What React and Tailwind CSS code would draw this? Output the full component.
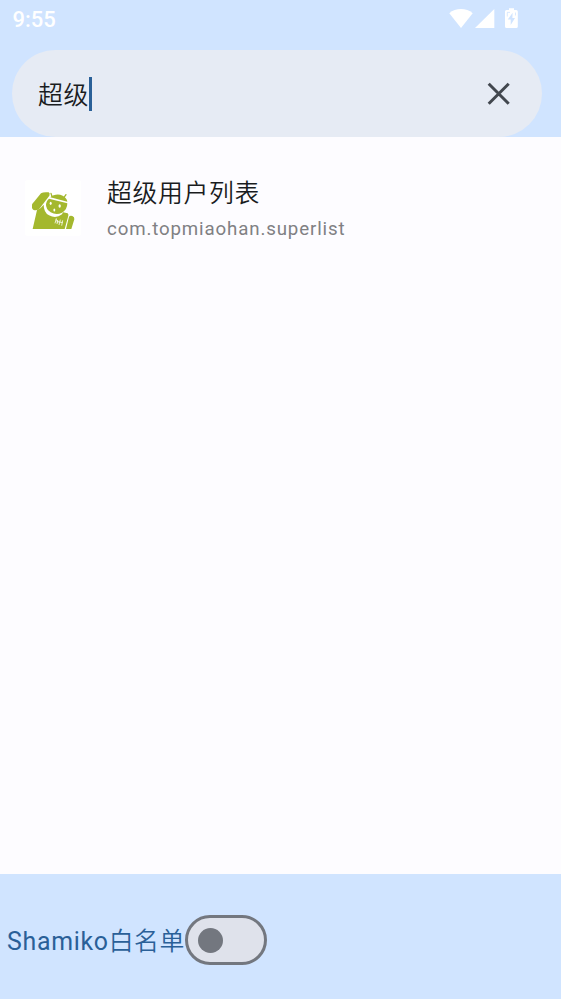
function StatusIcons() {
  return (
    <svg className="ml-auto h-[38px] w-[116px]" viewBox="445 0 116 38" fill="#fff">
      <path d="M449.300 13.200C455.500 7.600 466.500 7.600 472.700 13.200L461 28Z" />
      <path d="M494.300 9V28H475Z" />
      <path
        fillRule="evenodd"
        d="M509 8.200h5v1.800h2.200q1.600 0 1.600 1.600v14.800q0 1.600-1.600 1.600h-9.600q-1.600 0-1.600-1.600V11.600q0-1.600 1.600-1.600h2.400zM512.600 12.800L507.700 19.600h3v5.400l4.300-7h-2.600z"
      />
      <path d="M507.300 12.500v4M515.500 12.500v3M507 12.400h3" stroke="#d0e4ff" strokeWidth=".8" fill="none" />
    </svg>
  );
}

function AppIcon() {
  return (
    <svg className="h-14 w-14 shrink-0" viewBox="26 28 168 168">
      <rect x="26" y="28" width="168" height="168" rx="8" fill="#fff" />
      <g fill="#a4b82e">
        <path d="M47 101L74 68Q81 63 97 65Q102 68 99 75L71 112Q64 121 52 118Q47 116 47 110Z" />
        <path d="M62 118Q74 114 82 102Q82 125 98 134Q119 145 137 131L140 125L154 128Q157 130 156 135L145 175H49Z" />
        <path d="M102 80Q108 73 118 72Q129 70 139 75Q152 82 153 93Z" />
        <path d="M98 84L153 98Q153 117 137 126Q120 134 103 125Q88 115 89 100Q91 89 98 84Z" />
        <path d="M158 138Q162 133 168 136Q175 139 174 146L165 175H149Z" />
      </g>
      <path d="M107 78L104 68M143 80L149 72" stroke="#a4b82e" strokeWidth="4" strokeLinecap="round" />
      <ellipse cx="103" cy="98" rx="3" ry="5" fill="#fff" />
      <ellipse cx="130" cy="106" rx="3.500" ry="5.500" fill="#fff" />
      <ellipse cx="114" cy="118" rx="2.800" ry="4.500" fill="#fff" />
      <path
        d="M120 143L116 158M124 148L122 160M132 147L128 163M139 149L136 165M120 146L124 156M125 153L139 156"
        stroke="#fff"
        strokeWidth="2.300"
        fill="none"
      />
    </svg>
  );
}

export default function App() {
  return (
    <div className="flex h-[999px] w-[561px] flex-col overflow-hidden bg-[#fdfcff] font-[Roboto,'Noto_Sans_CJK_SC',sans-serif]">
      <header className="h-[137px] shrink-0 bg-[#d0e4ff]">
        <div className="flex h-[50px] items-start pl-[12.500px]">
          <span className="pt-[7px] text-[22px] leading-[26px] font-medium text-white">9:55</span>
          <StatusIcons />
        </div>
        <div className="mr-[19px] ml-3 flex h-[87px] items-center rounded-full bg-[#e6ebf4] pr-[32px] pl-[26px]">
          <span className="pt-[5px] text-[24.900px] leading-[36px] font-[350] tracking-[0.500px] text-[#1a1c1e]">超级</span>
          <span className="h-[34px] w-[3px] bg-[#2a6098]" />
          <svg className="ml-auto h-6 w-6" viewBox="0 0 24 24" fill="none" stroke="#42474e" strokeWidth="3">
            <path d="M2.700 1.700L22.700 21.700M22.700 1.700L2.700 21.700" />
          </svg>
        </div>
      </header>

      <main className="flex-1 pt-[42.500px] pl-[25px]">
        <div className="flex gap-[26px]">
          <AppIcon />
          <div className="flex flex-col">
            <span className="-mt-[3.500px] text-[24.900px] leading-[36px] font-[350] tracking-[0.600px] text-[#1a1c1e]">超级用户列表</span>
            <span className="mt-[4px] text-[18.700px] leading-[26px] tracking-[0.860px] text-[#808083]">com.topmiaohan.superlist</span>
          </div>
        </div>
      </main>

      <footer className="flex h-[125px] shrink-0 items-center bg-[#d0e4ff] pt-[7px] pl-[7px]">
        <span className="w-[178px] pt-[3px] text-[24.900px] leading-[36px] tracking-[0.700px] whitespace-nowrap text-[#2a6098]">
          Shamiko<span className="font-[350] tracking-[0.500px]">白名单</span>
        </span>
        <div className="flex h-[50px] w-[82px] items-center rounded-full border-[3px] border-[#73777f] bg-[#dfe2eb] pl-[10px]">
          <div className="h-[25px] w-[25px] rounded-full bg-[#73777f]" />
        </div>
      </footer>
    </div>
  );
}
